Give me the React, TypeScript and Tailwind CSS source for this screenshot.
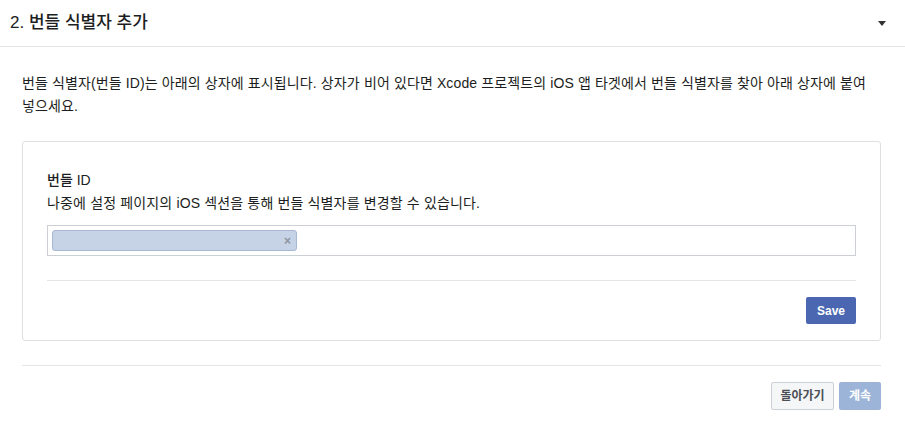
export default function App() {
  return (
    <div
      className="w-[905px] h-[427px] bg-white text-[#1c1e21] overflow-hidden"
      style={{ fontFamily: '"Liberation Sans", "Noto Sans CJK KR", sans-serif' }}
    >
      {/* Section header */}
      <div className="flex items-center justify-between h-[47px] pl-[10px] pr-[19px] border-b border-[#e5e5e5]">
        <h2 className="text-[17px] font-medium">2. 번들 식별자 추가</h2>
        <div className="w-0 h-0 border-l-[4px] border-r-[4px] border-t-[5px] border-l-transparent border-r-transparent border-t-[#333]" />
      </div>

      <div className="px-[22px] pr-[24px]">
        <p className="mt-[25px] text-[14px] leading-[23px] break-keep tracking-[0.12px]">
          번들 식별자(번들 ID)는 아래의 상자에 표시됩니다. 상자가 비어 있다면 Xcode 프로젝트의 iOS 앱 타겟에서 번들 식별자를 찾아 아래 상자에 붙여 넣으세요.
        </p>

        {/* Card */}
        <div className="mt-[23px] border border-[#dddfe2] rounded-[3px] px-[24px] pt-[28px] pb-[16px]">
          <div className="text-[14px] font-medium leading-[20px]">번들 ID</div>
          <div className="mt-[3px] text-[14px] leading-[20px] tracking-[0.15px]">
            나중에 설정 페이지의 iOS 섹션을 통해 번들 식별자를 변경할 수 있습니다.
          </div>
          <div className="mt-[12px] h-[31px] border border-[#ccd0d5] flex items-center px-[4px]">
            <div className="w-[245px] h-[21px] bg-[#c6d2e6] border border-[#a8b7d4] rounded-[3px] flex items-center justify-end pr-[5px]">
              <span className="text-[12px] leading-none text-[#8d949e] font-bold">×</span>
            </div>
          </div>
          <div className="mt-[24px] border-t border-[#e5e5e5]" />
          <div className="mt-[16px] flex justify-end">
            <button className="h-[27px] px-[11px] bg-[#4b67b2] rounded-[2px] text-white text-[12px] font-bold">
              Save
            </button>
          </div>
        </div>

        {/* Footer */}
        <div className="mt-[24px] border-t border-[#e5e5e5]" />
        <div className="mt-[16px] flex justify-end gap-[5px]">
          <button className="h-[28px] w-[63px] bg-[#f5f6f7] border border-[#ccd0d5] rounded-[2px] text-[#4b4f56] text-[12px] font-bold">
            돌아가기
          </button>
          <button className="h-[28px] w-[42px] bg-[#9cb4d8] rounded-[2px] text-white text-[12px] font-bold">
            계속
          </button>
        </div>
      </div>
    </div>
  );
}
